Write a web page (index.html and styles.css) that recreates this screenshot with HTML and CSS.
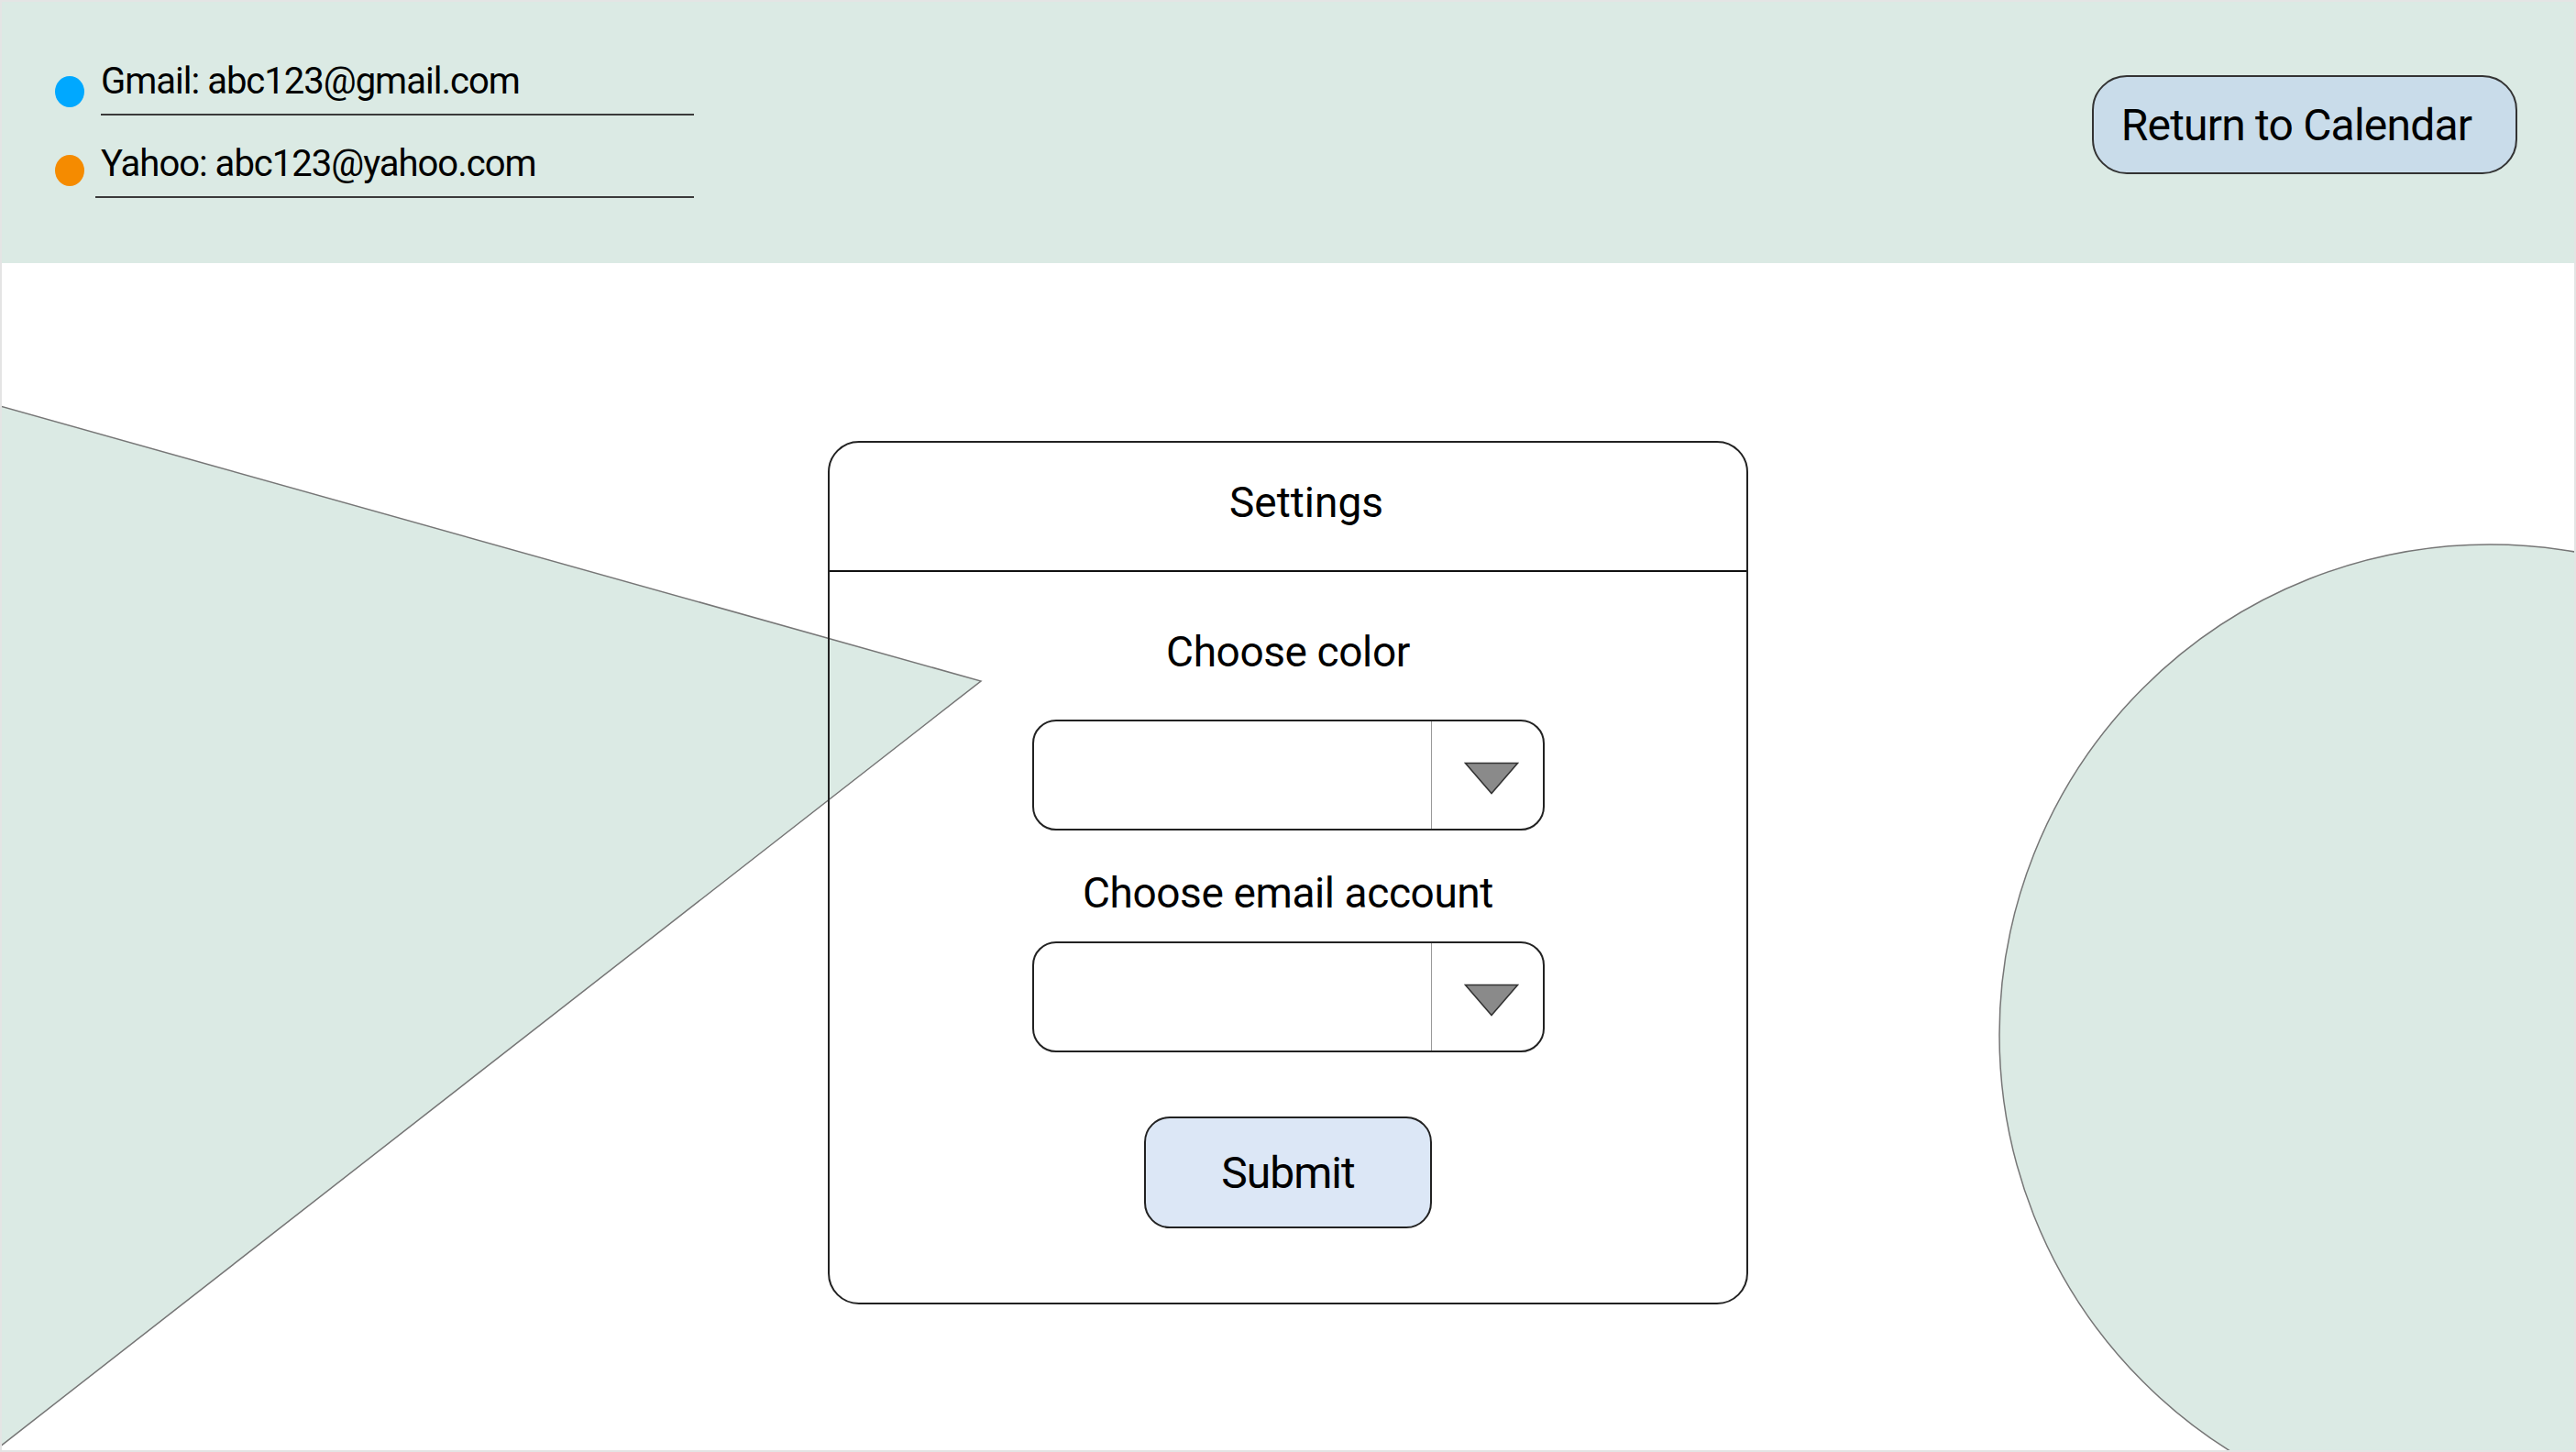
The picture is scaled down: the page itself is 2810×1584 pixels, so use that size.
FILE: index.html
```html
<!DOCTYPE html>
<html lang="en">
<head>
    <meta charset="UTF-8">
    <meta name="viewport" content="width=device-width, initial-scale=1.0">
    <title>Settings</title>
    <link rel="stylesheet" href="styles.css">
</head>
<body>
    <div class="page">
        <!-- background shapes -->
        <svg class="backdrop" width="2806" height="1580" viewBox="0 0 2806 1580">
            <polygon points="-2,441 1068,741 -2,1576" class="shape"/>
            <circle cx="2714" cy="1127" r="535" class="shape"/>
        </svg>

        <header class="topbar">
            <div class="accounts">
                <div class="account">
                    <span class="dot dot-gmail"></span>
                    <span class="account-text">Gmail: abc123@gmail.com</span>
                </div>
                <div class="account account-second">
                    <span class="dot dot-yahoo"></span>
                    <span class="account-text">Yahoo: abc123@yahoo.com</span>
                </div>
            </div>
            <button class="return-btn">Return to Calendar</button>
        </header>

        <main class="content">
            <div class="card">
                <div class="card-title">Settings</div>
                <div class="card-body">
                    <p class="field-label label-color">Choose color</p>
                    <div class="select">
                        <div class="select-value"></div>
                        <div class="select-arrow">
                            <svg width="60" height="36" viewBox="0 0 60 36">
                                <polygon points="1.5,1.5 58.5,1.5 30,34.5" class="arrow"/>
                            </svg>
                        </div>
                    </div>
                    <p class="field-label label-account">Choose email account</p>
                    <div class="select">
                        <div class="select-value"></div>
                        <div class="select-arrow">
                            <svg width="60" height="36" viewBox="0 0 60 36">
                                <polygon points="1.5,1.5 58.5,1.5 30,34.5" class="arrow"/>
                            </svg>
                        </div>
                    </div>
                    <button class="submit-btn">Submit</button>
                </div>
            </div>
        </main>
    </div>
</body>
</html>
```

FILE: styles.css
```css
body {
    margin: 0;
    background: #e4e4e4;
    font-family: Roboto, "Noto Sans", sans-serif;
    color: #000;
}
.page {
    position: relative;
    width: 2810px;
    height: 1584px;
    box-sizing: border-box;
    border: 2px solid #e4e4e4;
    background: #fff;
    overflow: hidden;
}
.backdrop {
    position: absolute;
    left: 0;
    top: 0;
}
.shape {
    fill: #dbeae4;
    stroke: #767676;
    stroke-width: 1.5;
}

/* top bar */
.topbar {
    position: relative;
    display: flex;
    justify-content: space-between;
    align-items: flex-start;
    height: 285px;
    box-sizing: border-box;
    padding: 63px 62px 0 58px;
    background: #dbeae4;
}
.accounts {
    display: flex;
    flex-direction: column;
    gap: 29px;
}
.account {
    display: flex;
    align-items: flex-start;
    gap: 18px;
}
.dot {
    width: 32px;
    height: 34px;
    border-radius: 50%;
    margin-top: 18px;
}
.dot-gmail {
    background: #00a8ff;
}
.dot-yahoo {
    background: #f58b00;
    margin-top: 14px;
}
.account-text {
    width: 647px;
    font-size: 40px;
    line-height: 48px;
    letter-spacing: -1px;
    padding-bottom: 11px;
    border-bottom: 2px solid #3a3a3a;
}
.account-second .account-text {
    margin-left: -6px;
    padding-left: 6px;
}
.return-btn {
    margin-top: 17px;
    width: 464px;
    height: 108px;
    padding: 0 18px 0 0;
    font-family: inherit;
    font-size: 48px;
    letter-spacing: -0.8px;
    color: #000;
    background: #c9dcea;
    border: 2px solid #333;
    border-radius: 38px;
}

/* settings card */
.content {
    position: relative;
    display: flex;
    justify-content: center;
    padding-top: 194px;
}
.card {
    width: 1004px;
    height: 942px;
    box-sizing: border-box;
    border: 2px solid #222;
    border-radius: 34px;
}
.card-title {
    height: 141px;
    box-sizing: border-box;
    display: flex;
    align-items: center;
    justify-content: center;
    padding: 0 0 10px 40px;
    font-size: 46px;
    border-bottom: 2px solid #111;
}
.card-body {
    display: flex;
    flex-direction: column;
    align-items: center;
}
.field-label {
    margin: 0;
    font-size: 46px;
    line-height: 55px;
    letter-spacing: -0.4px;
}
.label-color {
    margin-top: 60px;
    margin-bottom: 46px;
}
.label-account {
    margin-top: 41px;
    margin-bottom: 25px;
}
.select {
    display: flex;
    width: 559px;
    height: 121px;
    box-sizing: border-box;
    border: 2px solid #222;
    border-radius: 26px;
}
.select-value {
    flex: 1;
}
.select-arrow {
    width: 122px;
    display: flex;
    align-items: center;
    justify-content: center;
    border-left: 1.5px solid #999;
    padding: 6px 0 0 10px;
    box-sizing: border-box;
}
.arrow {
    fill: #8a8a8a;
    stroke: #333;
    stroke-width: 1.5;
}
.submit-btn {
    margin-top: 70px;
    width: 314px;
    height: 122px;
    padding: 0;
    font-family: inherit;
    font-size: 48px;
    letter-spacing: -1px;
    color: #000;
    background: #dce7f6;
    border: 2px solid #222;
    border-radius: 28px;
}
```
